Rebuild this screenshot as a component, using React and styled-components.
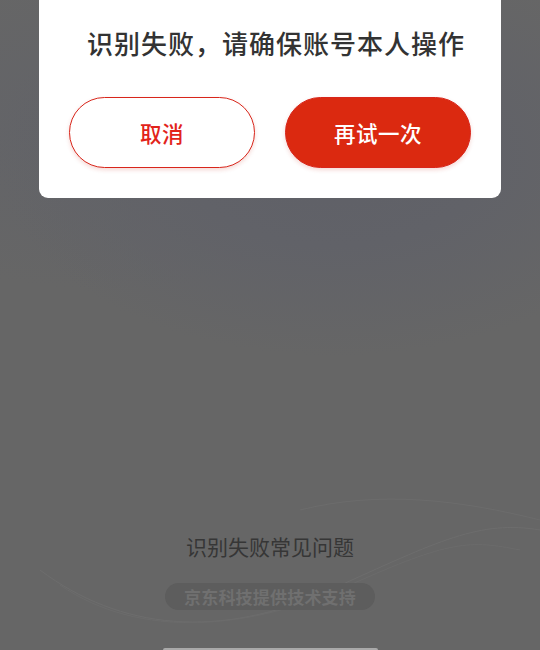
import React from 'react';
import styled, { createGlobalStyle } from 'styled-components';

const GlobalStyle = createGlobalStyle`
  html, body {
    margin: 0;
    padding: 0;
    background: #666666;
    font-family: "Noto Sans CJK SC", "Noto Sans", sans-serif;
  }
  * {
    box-sizing: border-box;
  }
`;

const Screen = styled.div`
  position: relative;
  width: 540px;
  height: 650px;
  overflow: hidden;
  display: flex;
  flex-direction: column;
  align-items: center;
  background:
    radial-gradient(ellipse 340px 200px at 62% 24%, #5f6067 0%, #616268 45%, rgba(102, 102, 102, 0) 100%),
    radial-gradient(ellipse 300px 160px at 20% 20%, #626368 0%, rgba(102, 102, 102, 0) 100%),
    #666666;
`;

const Waves = styled.svg`
  position: absolute;
  left: 0;
  bottom: 0;
  width: 540px;
  height: 160px;
  pointer-events: none;
`;

const Dialog = styled.div`
  position: relative;
  z-index: 1;
  width: 462px;
  background: #ffffff;
  border-radius: 0 0 9px 9px;
  padding: 24px 30px 30px;
  display: flex;
  flex-direction: column;
  align-items: center;
`;

const Title = styled.div`
  font-size: 26px;
  line-height: 38px;
  font-weight: 500;
  color: #333333;
  letter-spacing: 1px;
  margin-left: 12px;
`;

const Actions = styled.div`
  margin-top: 35px;
  width: 100%;
  display: flex;
  justify-content: space-between;
`;

const Button = styled.div`
  width: 186px;
  height: 71px;
  border-radius: 36px;
  display: flex;
  align-items: center;
  justify-content: center;
  font-size: 21.5px;
  font-weight: 500;
  letter-spacing: 0.5px;
  border: 1.5px solid #d8261b;
  background: ${p => (p.primary ? '#db2910' : '#ffffff')};
  color: ${p => (p.primary ? '#ffffff' : '#e2231a')};
  box-shadow: 0 2px 4px rgba(200, 40, 20, 0.18);
`;

const Spacer = styled.div`
  flex: 1;
`;

const Footer = styled.div`
  position: relative;
  z-index: 1;
  display: flex;
  flex-direction: column;
  align-items: center;
`;

const FaqLink = styled.div`
  font-size: 21px;
  line-height: 30px;
  color: #363636;
  margin-bottom: 1px;
`;

const Support = styled.div`
  margin-top: 21px;
  width: 210px;
  height: 27px;
  border-radius: 14px;
  background: #5d5d5d;
  color: #707070;
  font-size: 17px;
  font-weight: 700;
  display: flex;
  align-items: center;
  justify-content: center;
  letter-spacing: 0.2px;
`;

const BottomBar = styled.div`
  margin-top: 38px;
  width: 215px;
  height: 2px;
  border-radius: 2px 2px 0 0;
  background: #a9a9a9;
`;

export default function App() {
  return (
    <>
      <GlobalStyle />
      <Screen>
        <Waves viewBox="0 0 540 160">
          <path d="M40 80 C 120 140, 220 150, 330 100 S 480 30, 540 40" fill="none" stroke="#6d6d6d" strokeWidth="1" />
          <path d="M60 95 C 140 150, 250 140, 350 95 S 470 50, 520 60" fill="none" stroke="#6b6b6b" strokeWidth="1" />
          <path d="M300 20 C 380 0, 460 10, 540 30" fill="none" stroke="#6c6c6c" strokeWidth="1" />
        </Waves>
        <Dialog>
          <Title>识别失败，请确保账号本人操作</Title>
          <Actions>
            <Button>取消</Button>
            <Button primary>再试一次</Button>
          </Actions>
        </Dialog>
        <Spacer />
        <Footer>
          <FaqLink>识别失败常见问题</FaqLink>
          <Support>京东科技提供技术支持</Support>
          <BottomBar />
        </Footer>
      </Screen>
    </>
  );
}
